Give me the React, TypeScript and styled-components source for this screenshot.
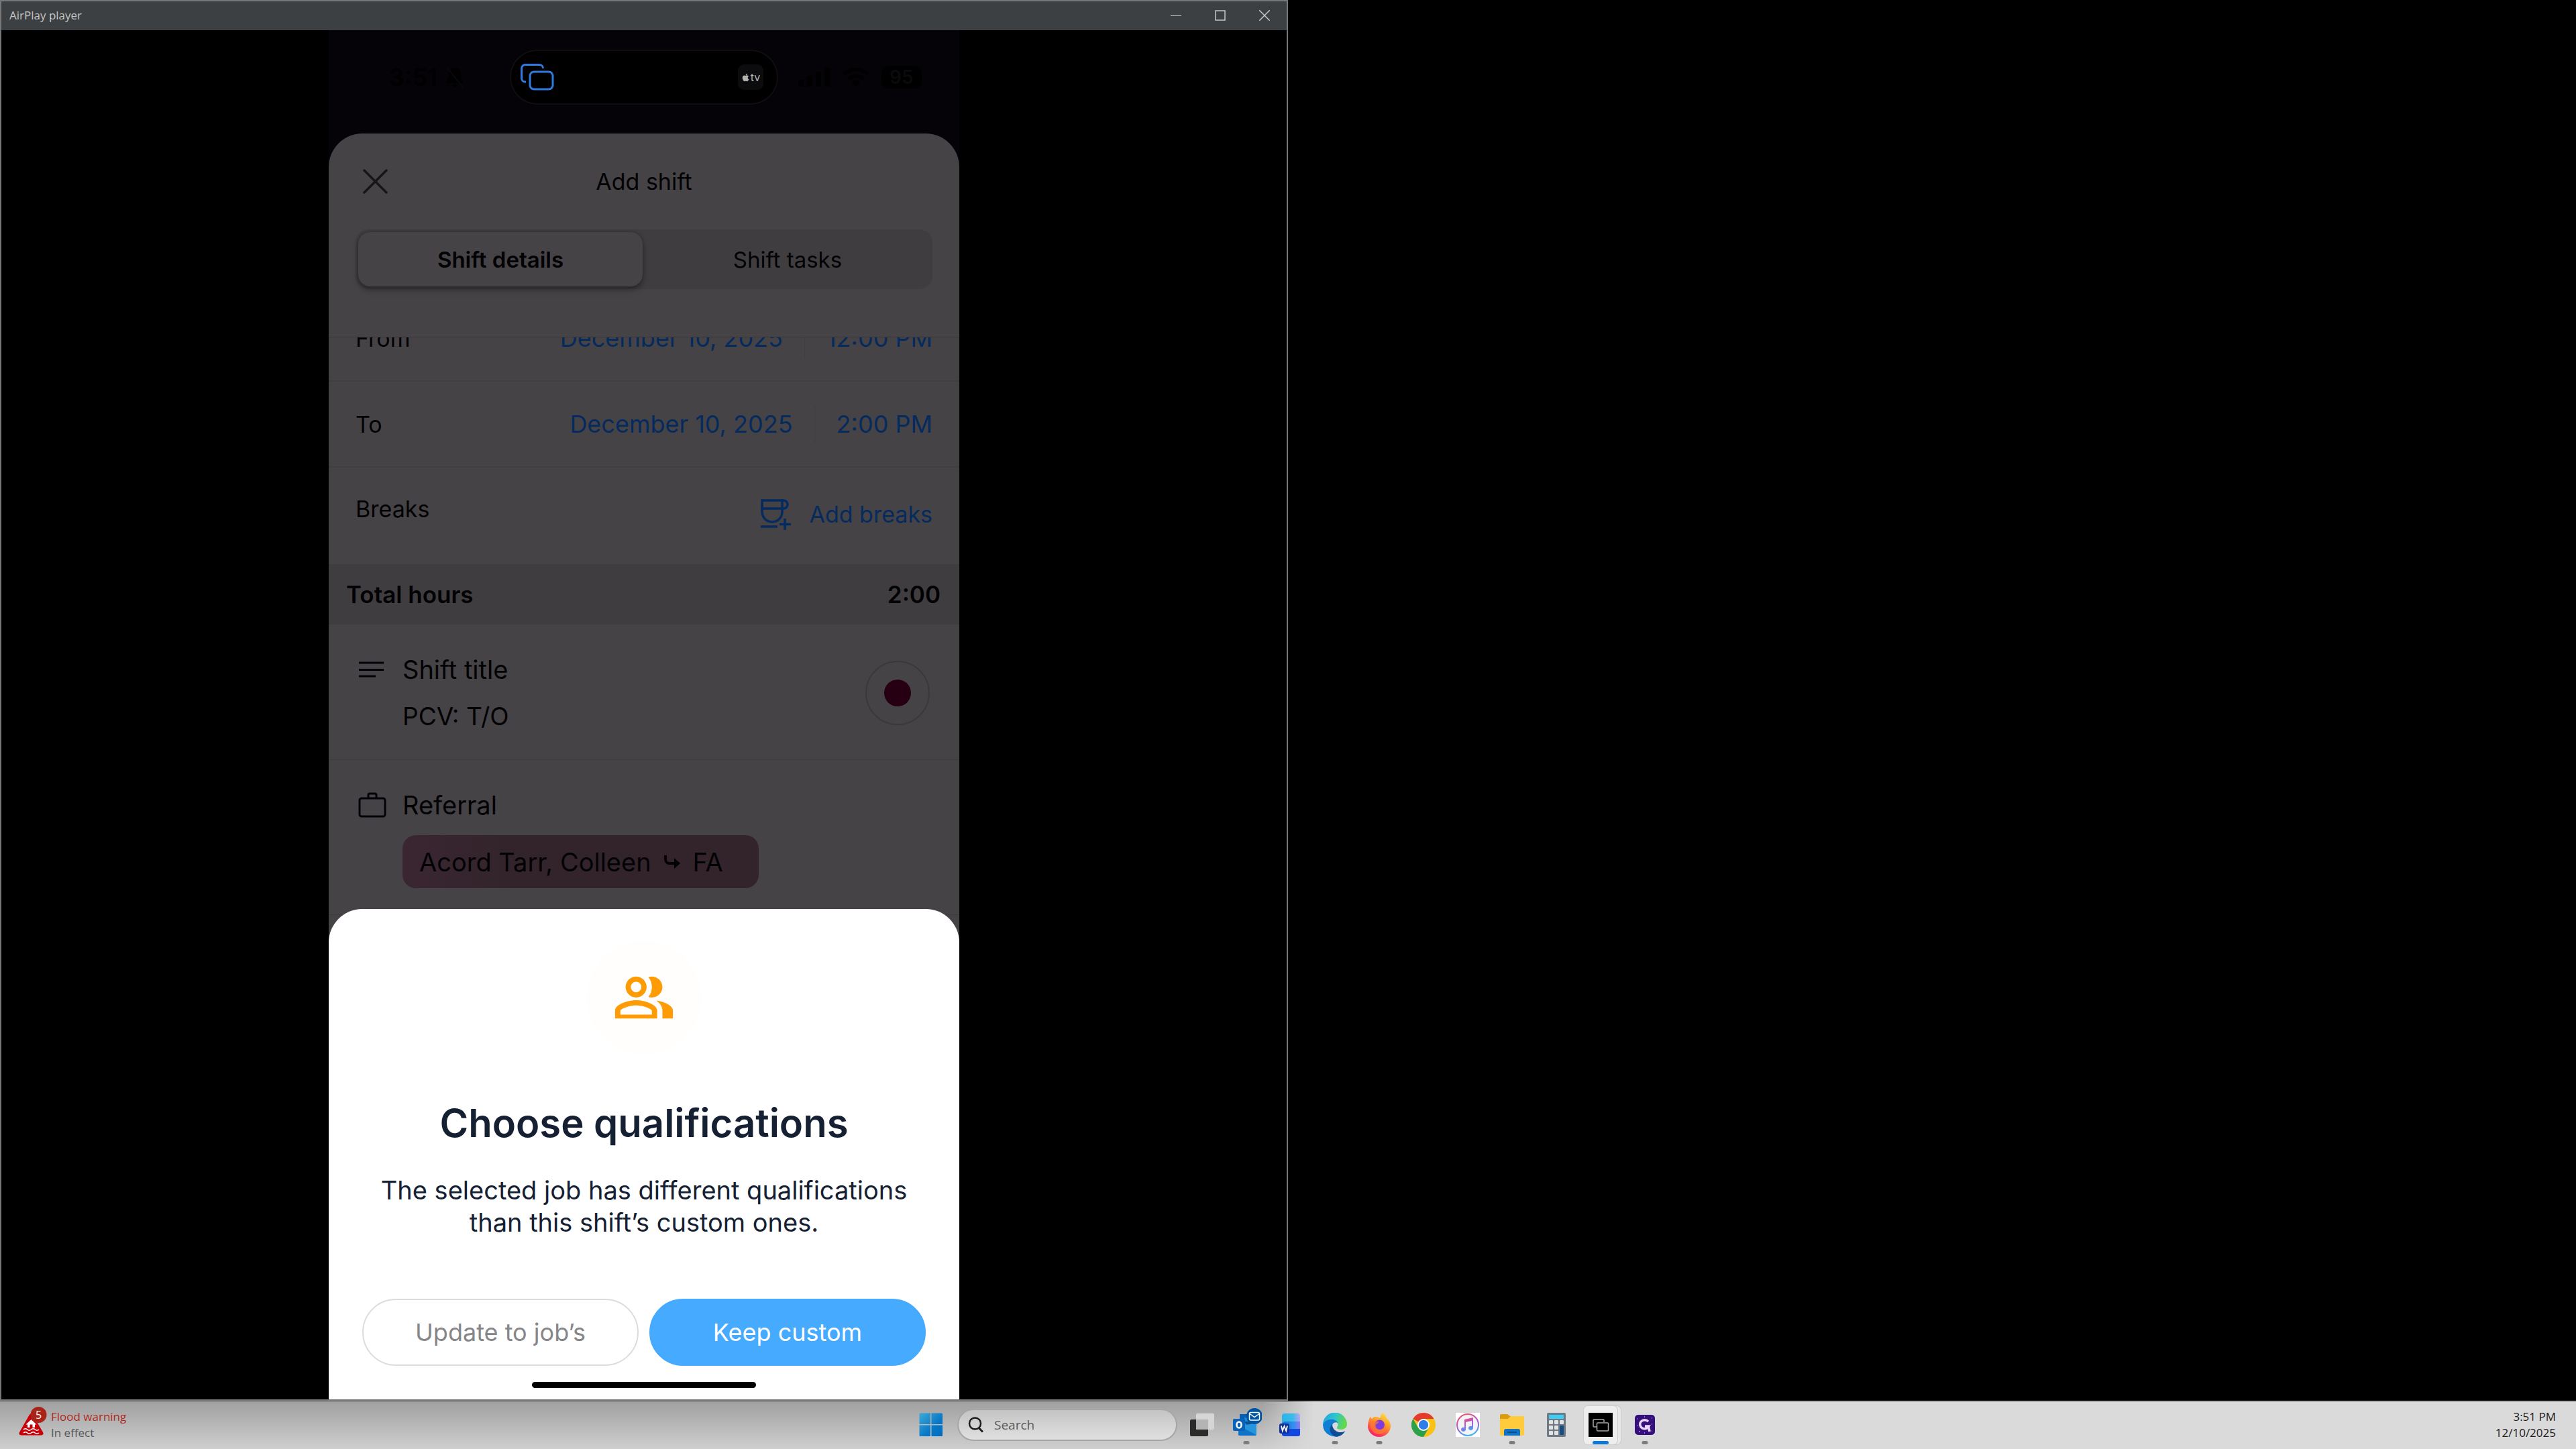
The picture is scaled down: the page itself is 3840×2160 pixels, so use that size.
import React, { useState } from "react";
import styled, { createGlobalStyle, css } from "styled-components";
import { FaApple } from "react-icons/fa";

const GlobalStyle = createGlobalStyle`
  *, *::before, *::after { box-sizing: border-box; }
  html, body { margin: 0; background: #000; }
  button, input { font: inherit; color: inherit; margin: 0; padding: 0; border: 0; background: none; text-align: inherit; }
  button { cursor: pointer; }
  h1, h2, p { margin: 0; font-weight: inherit; font-size: inherit; }
  svg { display: block; }
`;

/* ---------- desktop ---------- */

const Desktop = styled.div`
  display: flex;
  flex-direction: column;
  height: 100vh;
  background: #000;
  font-family: Inter, "Liberation Sans", sans-serif;
`;

const Workspace = styled.main`
  flex: 1;
  min-height: 0;
  display: flex;
`;

const PlayerWindow = styled.section`
  width: 50%;
  display: flex;
  flex-direction: column;
  border: 2px solid #777;
`;

const TitleBar = styled.header`
  height: 43px;
  flex: none;
  display: flex;
  align-items: center;
  justify-content: space-between;
  padding: 0 0 2px 12px;
  background: #3c4042;
  color: #c4c6c7;
  font: 17px/24px "Open Sans", "Noto Sans", sans-serif;
`;

const WindowControls = styled.div`
  display: flex;
  height: 100%;
`;

const WindowButton = styled.button`
  width: 66px;
  display: grid;
  place-items: center;
`;

const Stage = styled.div`
  flex: 1;
  min-height: 0;
  display: flex;
  justify-content: center;
  background: #000;
`;

/* ---------- phone ---------- */

const Phone = styled.div`
  position: relative;
  height: 100%;
  aspect-ratio: 940 / 2041;
  display: flex;
  flex-direction: column;
  overflow: hidden;
  background: #050307;
  color: #020204;
`;

const StatusBar = styled.div`
  height: 154px;
  flex: none;
  display: grid;
  grid-template-columns: 1fr 400px 1fr;
  align-items: start;
  padding: 29px 44px 0;
  column-gap: 24px;
`;

const StatusSide = styled.div<{ $end?: boolean }>`
  height: 82px;
  display: flex;
  align-items: center;
  gap: ${(p) => (p.$end ? 18 : 12)}px;
  justify-content: ${(p) => (p.$end ? "flex-start" : "flex-end")};
  padding: ${(p) => (p.$end ? "0 0 0 6px" : "0 44px 0 0")};
  color: #000;
  font-size: 36px;
  font-weight: 600;
`;

const Battery = styled.span`
  height: 34px;
  padding: 0 12px;
  border-radius: 11px;
  background: #000;
  color: #0b090c;
  font-size: 28px;
  line-height: 34px;
`;

const Island = styled.div`
  height: 82px;
  display: flex;
  align-items: center;
  justify-content: space-between;
  padding: 0 20px 0 14px;
  border: 2px solid #0f0d10;
  border-radius: 41px;
  background: #000;
`;

const TvBadge = styled.span`
  width: 38px;
  height: 38px;
  display: flex;
  align-items: center;
  justify-content: center;
  gap: 1px;
  border-radius: 9px;
  background: #0c0b0d;
  color: #b4b4b4;
  font-size: 16px;
`;

const Sheet = styled.div`
  flex: 1;
  min-height: 0;
  display: flex;
  flex-direction: column;
  border-radius: 50px 50px 0 0;
  background: #464346;
`;

const SheetHeader = styled.div`
  height: 143px;
  flex: none;
  display: grid;
  grid-template-columns: 44px 1fr 44px;
  align-items: center;
  padding: 0 48px;
  font-size: 34px;
  text-align: center;
`;

const Tabs = styled.div`
  height: 89px;
  flex: none;
  display: grid;
  grid-template-columns: 1fr 1fr;
  column-gap: 4px;
  margin: 0 40px 71px;
  padding: 4px;
  border-radius: 20px;
  background: #403d40;
`;

const Tab = styled.button<{ $active: boolean }>`
  border-radius: 18px;
  font-size: 33px;
  text-align: center;
  ${(p) =>
    p.$active &&
    css`
      font-weight: 600;
      background: #464346;
      box-shadow: 0 5px 10px rgba(0, 0, 0, 0.35), 0 0 4px rgba(0, 0, 0, 0.2);
    `}
`;

const ScrollArea = styled.div`
  flex: 1;
  min-height: 0;
  overflow: hidden;
  border-top: 1px solid #3a373a;
`;

const TimeRow = styled.div<{ $scrolled?: boolean }>`
  height: 128px;
  display: flex;
  align-items: center;
  margin-top: ${(p) => (p.$scrolled ? -62 : 0)}px;
  padding: 0 40px;
  border-bottom: 2px solid #413e41;
  font-size: 34px;
`;

const RowLabel = styled.span`
  flex: 1;
`;

const PickerButton = styled.button`
  color: #042a5e;
  font-size: 36px;
`;

const PickerDivider = styled.span`
  width: 1px;
  height: 58px;
  margin: 0 32px;
  background: #413e41;
`;

const BreaksRow = styled.div`
  height: 144px;
  display: flex;
  align-items: flex-start;
  padding: 37px 40px 0;
  font-size: 34px;
  line-height: 50px;
`;

const AddBreaks = styled.button`
  height: 66px;
  display: flex;
  align-items: center;
  gap: 26px;
  color: #042a5e;
`;

const TotalBar = styled.div`
  height: 90px;
  display: flex;
  align-items: center;
  justify-content: space-between;
  padding: 0 28px 0 26px;
  background: #403d40;
  font-size: 35px;
  font-weight: 600;
`;

const Field = styled.div`
  display: grid;
  grid-template-columns: 66px 1fr auto;
  row-gap: 20px;
  padding: 42px 44px 39px;
  border-bottom: 1px solid #3e3b3e;
  line-height: 50px;
`;

const FieldIcon = styled.span`
  display: flex;
  align-items: center;
`;

const FieldLabel = styled.label`
  font-size: 38px;
`;

const FieldInput = styled.input`
  grid-column: 2;
  grid-row: 2;
  min-width: 0;
  height: 50px;
  font-size: 37px;
`;

const ColorButton = styled.button`
  grid-column: 3;
  grid-row: 1 / 3;
  align-self: center;
  width: 96px;
  height: 96px;
  display: grid;
  place-items: center;
  border: 2px solid #3b383b;
  border-radius: 50%;
  &::before {
    content: "";
    width: 40px;
    height: 40px;
    border-radius: 50%;
    background: #260012;
  }
`;

const Chip = styled.button`
  grid-column: 2;
  justify-self: start;
  height: 79px;
  display: flex;
  align-items: center;
  gap: 18px;
  padding: 0 53px 0 25px;
  border-radius: 20px;
  background: linear-gradient(90deg, #3a2631, #33242b 30%, #33242b);
  font-size: 38px;
`;

/* ---------- modal ---------- */

const Modal = styled.div`
  position: absolute;
  left: 0;
  right: 0;
  bottom: 0;
  display: flex;
  flex-direction: column;
  align-items: center;
  padding: 47px 50px 17px;
  border-radius: 50px 50px 0 0;
  background: #fff;
  color: #152033;
  text-align: center;
`;

const ModalIcon = styled.div`
  width: 170px;
  height: 170px;
  display: grid;
  place-items: center;
  border-radius: 50%;
  background: #fffefc;
  color: #ff9b05;
`;

const ModalTitle = styled.h2`
  && {
    margin-top: 67px;
    font-size: 58px;
    font-weight: 600;
    line-height: 70px;
  }
`;

const ModalText = styled.p`
  && {
    margin-top: 41px;
    font-size: 38px;
    line-height: 48px;
  }
`;

const ModalActions = styled.div`
  align-self: stretch;
  display: flex;
  gap: 16px;
  margin-top: 90px;
`;

const ActionButton = styled.button<{ $primary?: boolean }>`
  flex: 1;
  height: 100px;
  border: 2px solid ${(p) => (p.$primary ? "#46aaff" : "#dcdcde")};
  border-radius: 50px;
  background: ${(p) => (p.$primary ? "#46aaff" : "#fff")};
  color: ${(p) => (p.$primary ? "#fff" : "#868688")};
  font-size: 36px;
  text-align: center;
`;

const HomeBar = styled.div`
  width: 334px;
  height: 9px;
  margin-top: 24px;
  border-radius: 5px;
  background: #000;
`;

/* ---------- taskbar ---------- */

const Taskbar = styled.footer`
  height: 72px;
  flex: none;
  display: grid;
  grid-template-columns: 1fr auto 1fr;
  align-items: center;
  padding: 0 28px;
  background:
    linear-gradient(90deg, rgba(176, 176, 176, 0) 50%, #b0b0b0 51%) 0 0 / 100% 2px no-repeat,
    linear-gradient(90deg, #888, #888) 0 0 / 100% 2px no-repeat,
    linear-gradient(90deg, rgba(218, 218, 218, 0) 49%, #dadada 51%),
    linear-gradient(#9f9f9f, #cfcfcf);
  font: 17px/24px "Open Sans", "Noto Sans", sans-serif;
`;

const Weather = styled.button`
  justify-self: start;
  display: flex;
  align-items: center;
  gap: 6px;
  color: #55585a;
`;

const Alert = styled.span`
  display: block;
  color: #b02a20;
`;

const Clock = styled.button`
  justify-self: end;
  color: #1b1b1b;
  && {
    padding-right: 2px;
    text-align: right;
  }
`;

const Line = styled.span`
  display: block;
`;

const TaskGroup = styled.nav`
  display: flex;
  align-items: center;
`;

const SearchBox = styled.label`
  width: 328px;
  height: 48px;
  display: flex;
  align-items: center;
  gap: 16px;
  margin: 0 4px 0 6px;
  padding: 0 14px;
  border: 2px solid #a6a6a6;
  border-radius: 24px;
  background: linear-gradient(#c4c4c4, #e0e0e0);
  font-size: 19px;
`;

const SearchInput = styled.input`
  flex: 1;
  min-width: 0;
  outline: 0;
  &::placeholder {
    color: #5a5a5a;
    opacity: 1;
  }
`;

const TaskButton = styled.button<{ $state?: "running" | "active" }>`
  position: relative;
  width: 66px;
  height: 72px;
  display: grid;
  place-items: center;
  ${(p) =>
    p.$state &&
    css`
      &::after {
        content: "";
        position: absolute;
        bottom: 7px;
        left: 50%;
        width: ${p.$state === "active" ? 24 : 9}px;
        height: 5px;
        border-radius: 3px;
        background: ${p.$state === "active" ? "#0f78d4" : "#7c7c7c"};
        transform: translateX(-50%);
      }
    `}
  ${(p) =>
    p.$state === "active" &&
    css`
      &::before {
        content: "";
        position: absolute;
        left: 8px;
        top: 8px;
        width: 50px;
        height: 57px;
        border-radius: 6px;
        background: #eeeeee;
        box-shadow: 0 0 0 1px #cfcfcf, 5px 0 0 0 #e9e9e9, 5px 0 0 1px #cbcbcb;
      }
    `}
  svg {
    position: relative;
  }
`;

/* ---------- icons ---------- */

const MirrorIcon = () => (
  <svg width="50" height="40" viewBox="0 0 50 40" fill="none" stroke="#2f7be0" strokeWidth="3">
    <path d="M8 27H7a5.500 5.500 0 0 1-5.500-5.500V7A5.500 5.500 0 0 1 7 1.500h21A5.500 5.500 0 0 1 33.500 7" />
    <rect x="14" y="12" width="34" height="26" rx="6" />
  </svg>
);

const BellOff = () => (
  <svg width="28" height="34" viewBox="0 0 28 34" fill="#000">
    <path d="M14 3c-6 0-9 4-9 10 0 8-4 9-4 13h26c0-4-4-5-4-13 0-6-3-10-9-10zM10 28a4 4 0 0 0 8 0z" />
    <path d="M2 2l24 30" stroke="#0b090c" strokeWidth="2" />
  </svg>
);

const Signal = () => (
  <svg width="48" height="28" viewBox="0 0 48 28" fill="#000">
    <rect y="18" width="8" height="10" rx="2" />
    <rect x="13" y="12" width="8" height="16" rx="2" />
    <rect x="26" y="6" width="8" height="22" rx="2" />
    <rect x="39" width="8" height="28" rx="2" />
  </svg>
);

const Wifi = () => (
  <svg width="40" height="28" viewBox="0 0 40 28" fill="none" stroke="#000" strokeWidth="5">
    <path d="M2 10a25 25 0 0 1 36 0M9 17a16 16 0 0 1 22 0" />
    <path d="M14 21a8 8 0 0 1 12 0l-6 7z" fill="#000" stroke="none" />
  </svg>
);

const CloseIcon = () => (
  <svg width="44" height="44" viewBox="0 0 44 44" stroke="#161619" strokeWidth="3.500" strokeLinecap="round">
    <path d="M5 5l33 33M38 5L5 38" />
  </svg>
);

const CupIcon = () => (
  <svg width="47" height="48" viewBox="0 0 47 48" fill="none" stroke="#042a5e" strokeWidth="3.500">
    <path d="M3 3h30v16c0 9-6 16-15 16S3 28 3 19z" />
    <path d="M3 15h32a6 6 0 0 0 6-6 6 6 0 0 0-6-6h-3" />
    <path d="M1 42h25M37 30v17M29 38.500h17" />
  </svg>
);

const LinesIcon = () => (
  <svg width="40" height="26" viewBox="0 0 40 26" stroke="#020308" strokeWidth="3">
    <path d="M1 3h37M1 13.500h37M1 23h25" />
  </svg>
);

const BriefcaseIcon = () => (
  <svg width="42" height="38" viewBox="0 0 42 38" fill="none" stroke="#020308" strokeWidth="3">
    <rect x="2" y="9" width="38" height="27" rx="3" />
    <path d="M15 9V4a2 2 0 0 1 2-2h8a2 2 0 0 1 2 2v5" />
  </svg>
);

const SubArrow = () => (
  <svg width="26" height="22" viewBox="0 0 26 22" fill="none" stroke="#020204" strokeWidth="4">
    <path d="M3 1v6a6 6 0 0 0 6 6h11" />
    <path d="M16 5l9 8-9 8z" fill="#020204" stroke="none" />
  </svg>
);

const PeopleIcon = () => (
  <svg width="94" height="94" viewBox="0 0 24 24" fill="currentColor">
    <path d="M16.670 13.130C18.040 14.060 19 15.320 19 17v3h4v-3c0-2.180-3.570-3.470-6.330-3.870zM15 12c2.210 0 4-1.790 4-4s-1.790-4-4-4c-.470 0-.910.100-1.330.240C14.500 5.270 15 6.580 15 8s-.500 2.730-1.330 3.760c.420.140.860.240 1.330.240z" />
    <path fillRule="evenodd" d="M9 12c2.210 0 4-1.790 4-4s-1.790-4-4-4-4 1.790-4 4 1.790 4 4 4zm0-6c1.100 0 2 .900 2 2s-.900 2-2 2-2-.900-2-2 .900-2 2-2zM9 13c-2.670 0-8 1.340-8 4v3h16v-3c0-2.660-5.330-4-8-4zm6 5.500H3v-1.490C3.200 16.290 6.300 15 9 15s5.800 1.290 6 2v1.500z" />
  </svg>
);

const FloodIcon = () => (
  <svg width="42" height="54" viewBox="0 0 42 54">
    <path d="M15.500 12.500c1.600-2.700 3.900-2.700 5.500 0l15 25.500c1.500 2.700 0 4.500-2.500 4.500H4C1 42.500-.3 40.500 1 38z" fill="#c80008" />
    <path d="M18.500 19l8 7.500h-2.500V31h-3.500v-4.500h-4V31H13v-4.500h-2.500z" fill="#fff" />
    <path d="M7 34q3-2.500 5.750 0t5.750 0 5.750 0 5.750 0M7 39q3-2.500 5.750 0t5.750 0 5.750 0 5.750 0" fill="none" stroke="#fff" strokeWidth="1.500" />
    <circle cx="29.500" cy="12" r="12" fill="#a82318" />
    <text x="29.500" y="17.500" fill="#fff" fontSize="16" fontFamily="Open Sans, sans-serif" textAnchor="middle">5</text>
  </svg>
);

const WindowsIcon = () => (
  <svg width="36" height="36" viewBox="0 0 36 36">
    <defs>
      <linearGradient id="win" x1="0" y1="0" x2="1" y2="1">
        <stop offset="0" stopColor="#3fa9d4" />
        <stop offset=".6" stopColor="#0878c6" />
        <stop offset="1" stopColor="#0069bd" />
      </linearGradient>
    </defs>
    <path d="M2 .5h15v16.500H.5V2A1.500 1.500 0 0 1 2 .5zM18.500.5h15A1.500 1.500 0 0 1 35 2v15H18.500zM.5 18.500H17V35H2a1.500 1.500 0 0 1-1.500-1.500zM18.500 18.500H35v15a1.500 1.500 0 0 1-1.500 1.500h-15z" fill="url(#win)" />
  </svg>
);

const SearchIcon = () => (
  <svg width="23" height="24" viewBox="0 0 23 24" fill="none" stroke="#1c1c1c" strokeWidth="2.500">
    <circle cx="10.500" cy="10" r="8.500" />
    <path d="M16 16.500l6 6" strokeWidth="3" />
  </svg>
);

const TaskViewIcon = () => (
  <svg width="36" height="36" viewBox="0 0 36 36">
    <rect y="10" width="27" height="25" rx="2" fill="#2b2b2a" />
    <rect x="9" y="1" width="27" height="24" rx="2" fill="#d6d6d6" />
    <rect x="9" y="10" width="18" height="15" fill="#b4b4b4" />
  </svg>
);

const OutlookIcon = () => (
  <svg width="46" height="54" viewBox="0 -4 46 54">
    <path d="M13 7h23v18H13z" fill="#0a5fae" />
    <path d="M20 12h16v14H20z" fill="#1b87dc" />
    <path d="M20 18h14l-9 8z" fill="#0d4f8f" />
    <path d="M11 24l27-3v16a2 2 0 0 1-2 2H13a2 2 0 0 1-2-2z" fill="#2596de" />
    <path d="M11 24l27 14-2 1H13a2 2 0 0 1-2-2z" fill="#1173c8" />
    <rect x="3" y="14" width="18" height="18" rx="2" fill="#0b62b8" />
    <ellipse cx="12" cy="23" rx="3.500" ry="4.500" fill="none" stroke="#fff" strokeWidth="2.500" />
    <circle cx="35" cy="10" r="12" fill="#0053a0" />
    <rect x="27.500" y="4.500" width="15" height="11.500" rx="2" fill="none" stroke="#fff" strokeWidth="1.500" />
    <path d="M28 6.500l7 5 7-5" fill="none" stroke="#fff" strokeWidth="1.500" />
  </svg>
);

const WordIcon = () => (
  <svg width="36" height="36" viewBox="0 0 36 36">
    <defs>
      <linearGradient id="wd" x1="0" y1="0" x2="1" y2="0">
        <stop offset="0" stopColor="#27b5ea" />
        <stop offset=".6" stopColor="#3cbbe8" />
        <stop offset="1" stopColor="#b9a6f0" />
      </linearGradient>
      <linearGradient id="wm" x1="0" y1="0" x2="1" y2="0">
        <stop offset="0" stopColor="#1670d8" />
        <stop offset=".6" stopColor="#2b90ee" />
        <stop offset="1" stopColor="#8f7cf0" />
      </linearGradient>
    </defs>
    <rect x="5" y="1" width="27" height="20" rx="4" fill="url(#wd)" />
    <path d="M5 17a5 5 0 0 1 5-4h22v14H5z" fill="url(#wm)" />
    <path d="M5 28a4 4 0 0 1 4-4h23v8a3 3 0 0 1-3 3H8a3 3 0 0 1-3-3z" fill="#1248e0" />
    <rect x="1" y="16" width="15" height="15" rx="3" fill="#0f3298" />
    <path d="M4 19.500l1.800 7.500 2.700-7 2.700 7 1.800-7.500" fill="none" stroke="#fff" strokeWidth="1.800" />
  </svg>
);

const EdgeIcon = () => (
  <svg width="36" height="36" viewBox="0 0 36 36">
    <defs>
      <linearGradient id="edgeTop" x1="0" y1="0" x2="1" y2=".3">
        <stop offset="0" stopColor="#1fa2dc" />
        <stop offset=".5" stopColor="#2bc3d2" />
        <stop offset="1" stopColor="#62d84e" />
      </linearGradient>
    </defs>
    <path d="M0 18a18 18 0 0 1 36-1c0 5-4 8-9 8-4 0-6-1-6-3 0-1 1.500-2 1.500-4.500C22.500 13 18 9.500 12.500 9.500 6 9.500 1 13 0 18z" fill="url(#edgeTop)" />
    <path d="M0 18c1-5 6-8.500 12.500-8.500 5 0 9 2.500 10 6-4-3-9 0-9 6 0 8 8 12.500 15 10.500A18 18 0 0 1 0 18z" fill="#0f7fd3" />
    <path d="M14 17c-3 3-5 8-2 13 2.500 4 6 6 9.500 5.800A18 18 0 0 0 33.500 27c-3 2-7 2.600-11 1.500-5-1.500-8.500-6-8.500-11.500z" fill="#114c98" />
  </svg>
);

const FirefoxIcon = () => (
  <svg width="36" height="36" viewBox="0 0 36 36">
    <defs>
      <linearGradient id="ff" x1=".8" y1="0" x2=".3" y2="1">
        <stop offset="0" stopColor="#ffe642" />
        <stop offset=".45" stopColor="#ff9628" />
        <stop offset="1" stopColor="#f5166b" />
      </linearGradient>
    </defs>
    <path d="M23 0c3 2 5 5 6 8 3 2 6 7 6 12a17 16 0 0 1-34 0C1 14 3 9 5 5c0 2 1 3 2 4 2-2 3-3 6-3 3 0 5 1 6 2 1-3 2-6 4-8z" fill="url(#ff)" />
    <circle cx="18.500" cy="18" r="7.500" fill="#7f3be0" />
    <path d="M5 13c3-2 7 0 9 0l4 0c-1 3-4 3-5 5-1 4 2 7 6 7 4 0 7-3 7-8 4 8-1 15-8 15C9 32 3 23 5 13z" fill="#ff7b2e" fillOpacity=".7" />
  </svg>
);

const ChromeIcon = () => (
  <svg width="36" height="36" viewBox="0 0 36 36">
    <circle cx="18" cy="18" r="18" fill="#fbc216" />
    <path d="M18 18L2.400 9A18 18 0 0 1 33.600 9H18z" fill="#e33b2e" />
    <path d="M2.400 9l7.800 13.500L18 27l7.800-4.500L18 36A18 18 0 0 1 2.400 9z" fill="#2da04b" />
    <circle cx="18" cy="18" r="9" fill="#fff" />
    <circle cx="18" cy="18" r="7.200" fill="#2f7de9" />
  </svg>
);

const MusicIcon = () => (
  <svg width="36" height="36" viewBox="0 0 36 36">
    <defs>
      <linearGradient id="mu" x1=".3" y1="0" x2=".6" y2="1">
        <stop offset="0" stopColor="#f2506e" />
        <stop offset=".55" stopColor="#a95be0" />
        <stop offset="1" stopColor="#35b4f2" />
      </linearGradient>
    </defs>
    <rect width="36" height="36" fill="#fff" />
    <circle cx="18" cy="18" r="16" fill="#f4f4f6" stroke="url(#mu)" strokeWidth="2" />
    <path d="M13 10l13-3v16a3.500 3.200 0 1 1-2-3v-8l-9 2v11a3.500 3.200 0 1 1-2-3z" fill="url(#mu)" />
  </svg>
);

const FolderIcon = () => (
  <svg width="36" height="36" viewBox="0 0 36 36">
    <path d="M0 4a2 2 0 0 1 2-2h9l4 3h19a2 2 0 0 1 2 2v6H0z" fill="#dd9c0b" />
    <path d="M0 9h12l4-4h20v27a2 2 0 0 1-2 2H2a2 2 0 0 1-2-2z" fill="#ffcb3d" />
    <path d="M6 34v-7a3 3 0 0 1 3-3h18a3 3 0 0 1 3 3v7z" fill="#1173c4" />
    <path d="M11 29h14" stroke="#0a4f92" strokeWidth="2" />
  </svg>
);

const CalculatorIcon = () => (
  <svg width="28" height="36" viewBox="0 0 28 36">
    <rect width="28" height="36" rx="2" fill="#717a83" />
    <rect x="3" y="3" width="22" height="6" rx="1" fill="#3ecdf6" />
    {[11, 19, 27].map((y) => (
      <g key={y} fill="#dfe3e6">
        <rect x="3" y={y} width="6" height="6" rx="1" />
        <rect x="11" y={y} width="6" height="6" rx="1" />
      </g>
    ))}
    <rect x="19" y="11" width="6" height="6" rx="1" fill="#dfe3e6" />
    <rect x="19" y="19" width="6" height="14" rx="1" fill="#164c86" />
  </svg>
);

const AirplayIcon = () => (
  <svg width="36" height="36" viewBox="0 0 36 36" fill="none" stroke="#a9a9a9" strokeWidth="1.500">
    <rect width="36" height="36" fill="#000" stroke="none" />
    <path d="M12 21H8a1 1 0 0 1-1-1v-9a1 1 0 0 1 1-1h14a1 1 0 0 1 1 1v3" />
    <rect x="12.500" y="15" width="17" height="12" rx="1" />
  </svg>
);

const GIcon = () => (
  <svg width="30" height="30" viewBox="0 0 30 30">
    <rect width="30" height="30" rx="5" fill="#35107a" />
    <path d="M20 10a7 6.500 0 1 0 1 7h-6M20 16l2 9" fill="none" stroke="#e9d5ff" strokeWidth="3.500" />
    <path d="M4 6h1M25 5h1M4 16h1M25 14h1M6 25h2M25 24h1M14 3h1M14 27h1" stroke="#b98cf5" strokeWidth="1.500" />
  </svg>
);

/* ---------- data ---------- */

const tasks: { name: string; icon: React.ReactNode; state?: "running" | "active" }[] = [
  { name: "Task view", icon: <TaskViewIcon /> },
  { name: "Outlook", icon: <OutlookIcon />, state: "running" },
  { name: "Word", icon: <WordIcon /> },
  { name: "Edge", icon: <EdgeIcon />, state: "running" },
  { name: "Firefox", icon: <FirefoxIcon />, state: "running" },
  { name: "Chrome", icon: <ChromeIcon /> },
  { name: "Music", icon: <MusicIcon /> },
  { name: "File Explorer", icon: <FolderIcon />, state: "running" },
  { name: "Calculator", icon: <CalculatorIcon /> },
  { name: "AirPlay", icon: <AirplayIcon />, state: "active" },
  { name: "G", icon: <GIcon />, state: "running" },
];

const times = [
  { label: "From", date: "December 10, 2025", time: "12:00 PM" },
  { label: "To", date: "December 10, 2025", time: "2:00 PM" },
];

const tabs = ["Shift details", "Shift tasks"];

export default function App() {
  const [tab, setTab] = useState(tabs[0]);
  const [title, setTitle] = useState("PCV: T/O");

  return (
    <Desktop>
      <GlobalStyle />
      <Workspace>
        <PlayerWindow>
          <TitleBar>
            AirPlay player
            <WindowControls>
              <WindowButton aria-label="Minimize">
                <svg width="16" height="16" viewBox="0 0 16 16" stroke="#c4c6c7"><path d="M0 8.500h16" /></svg>
              </WindowButton>
              <WindowButton aria-label="Maximize">
                <svg width="16" height="16" viewBox="0 0 16 16" fill="none" stroke="#c4c6c7" strokeWidth="1.500"><rect x="1" y="1" width="14" height="14" /></svg>
              </WindowButton>
              <WindowButton aria-label="Close">
                <svg width="16" height="16" viewBox="0 0 16 16" stroke="#c4c6c7" strokeWidth="1.500"><path d="M0 0l16 16M16 0L0 16" /></svg>
              </WindowButton>
            </WindowControls>
          </TitleBar>
          <Stage>
            <Phone>
              <StatusBar>
                <StatusSide>
                  3:51
                  <BellOff />
                </StatusSide>
                <Island>
                  <MirrorIcon />
                  <TvBadge>
                    <FaApple size={13} />
                    tv
                  </TvBadge>
                </Island>
                <StatusSide $end>
                  <Signal />
                  <Wifi />
                  <Battery>95</Battery>
                </StatusSide>
              </StatusBar>
              <Sheet>
                <SheetHeader>
                  <button aria-label="Close">
                    <CloseIcon />
                  </button>
                  <h1>Add shift</h1>
                </SheetHeader>
                <Tabs role="tablist">
                  {tabs.map((t) => (
                    <Tab key={t} role="tab" aria-selected={t === tab} $active={t === tab} onClick={() => setTab(t)}>
                      {t}
                    </Tab>
                  ))}
                </Tabs>
                <ScrollArea>
                  {times.map((row, i) => (
                    <TimeRow key={row.label} $scrolled={i === 0}>
                      <RowLabel>{row.label}</RowLabel>
                      <PickerButton>{row.date}</PickerButton>
                      <PickerDivider />
                      <PickerButton>{row.time}</PickerButton>
                    </TimeRow>
                  ))}
                  <BreaksRow>
                    <RowLabel>Breaks</RowLabel>
                    <AddBreaks>
                      <CupIcon />
                      Add breaks
                    </AddBreaks>
                  </BreaksRow>
                  <TotalBar>
                    <span>Total hours</span>
                    <span>2:00</span>
                  </TotalBar>
                  <Field>
                    <FieldIcon>
                      <LinesIcon />
                    </FieldIcon>
                    <FieldLabel htmlFor="shift-title">Shift title</FieldLabel>
                    <FieldInput id="shift-title" value={title} onChange={(e) => setTitle(e.target.value)} />
                    <ColorButton aria-label="Shift color" />
                  </Field>
                  <Field>
                    <FieldIcon>
                      <BriefcaseIcon />
                    </FieldIcon>
                    <FieldLabel htmlFor="referral">Referral</FieldLabel>
                    <Chip id="referral">
                      Acord Tarr, Colleen
                      <SubArrow />
                      <span>FA</span>
                    </Chip>
                  </Field>
                </ScrollArea>
              </Sheet>
              <Modal role="dialog" aria-labelledby="modal-title">
                <ModalIcon>
                  <PeopleIcon />
                </ModalIcon>
                <ModalTitle id="modal-title">Choose qualifications</ModalTitle>
                <ModalText>
                  The selected job has different qualifications
                  <br />
                  than this shift’s custom ones.
                </ModalText>
                <ModalActions>
                  <ActionButton>Update to job’s</ActionButton>
                  <ActionButton $primary>Keep custom</ActionButton>
                </ModalActions>
                <HomeBar />
              </Modal>
            </Phone>
          </Stage>
        </PlayerWindow>
      </Workspace>
      <Taskbar>
        <Weather>
          <FloodIcon />
          <span>
            <Alert>Flood warning</Alert>
            <Line>In effect</Line>
          </span>
        </Weather>
        <TaskGroup aria-label="Apps">
          <TaskButton aria-label="Start">
            <WindowsIcon />
          </TaskButton>
          <SearchBox>
            <SearchIcon />
            <SearchInput type="text" placeholder="Search" aria-label="Search" />
          </SearchBox>
          {tasks.map((t) => (
            <TaskButton key={t.name} aria-label={t.name} $state={t.state}>
              {t.icon}
            </TaskButton>
          ))}
        </TaskGroup>
        <Clock>
          <Line>3:51 PM</Line>
          <Line>12/10/2025</Line>
        </Clock>
      </Taskbar>
    </Desktop>
  );
}
